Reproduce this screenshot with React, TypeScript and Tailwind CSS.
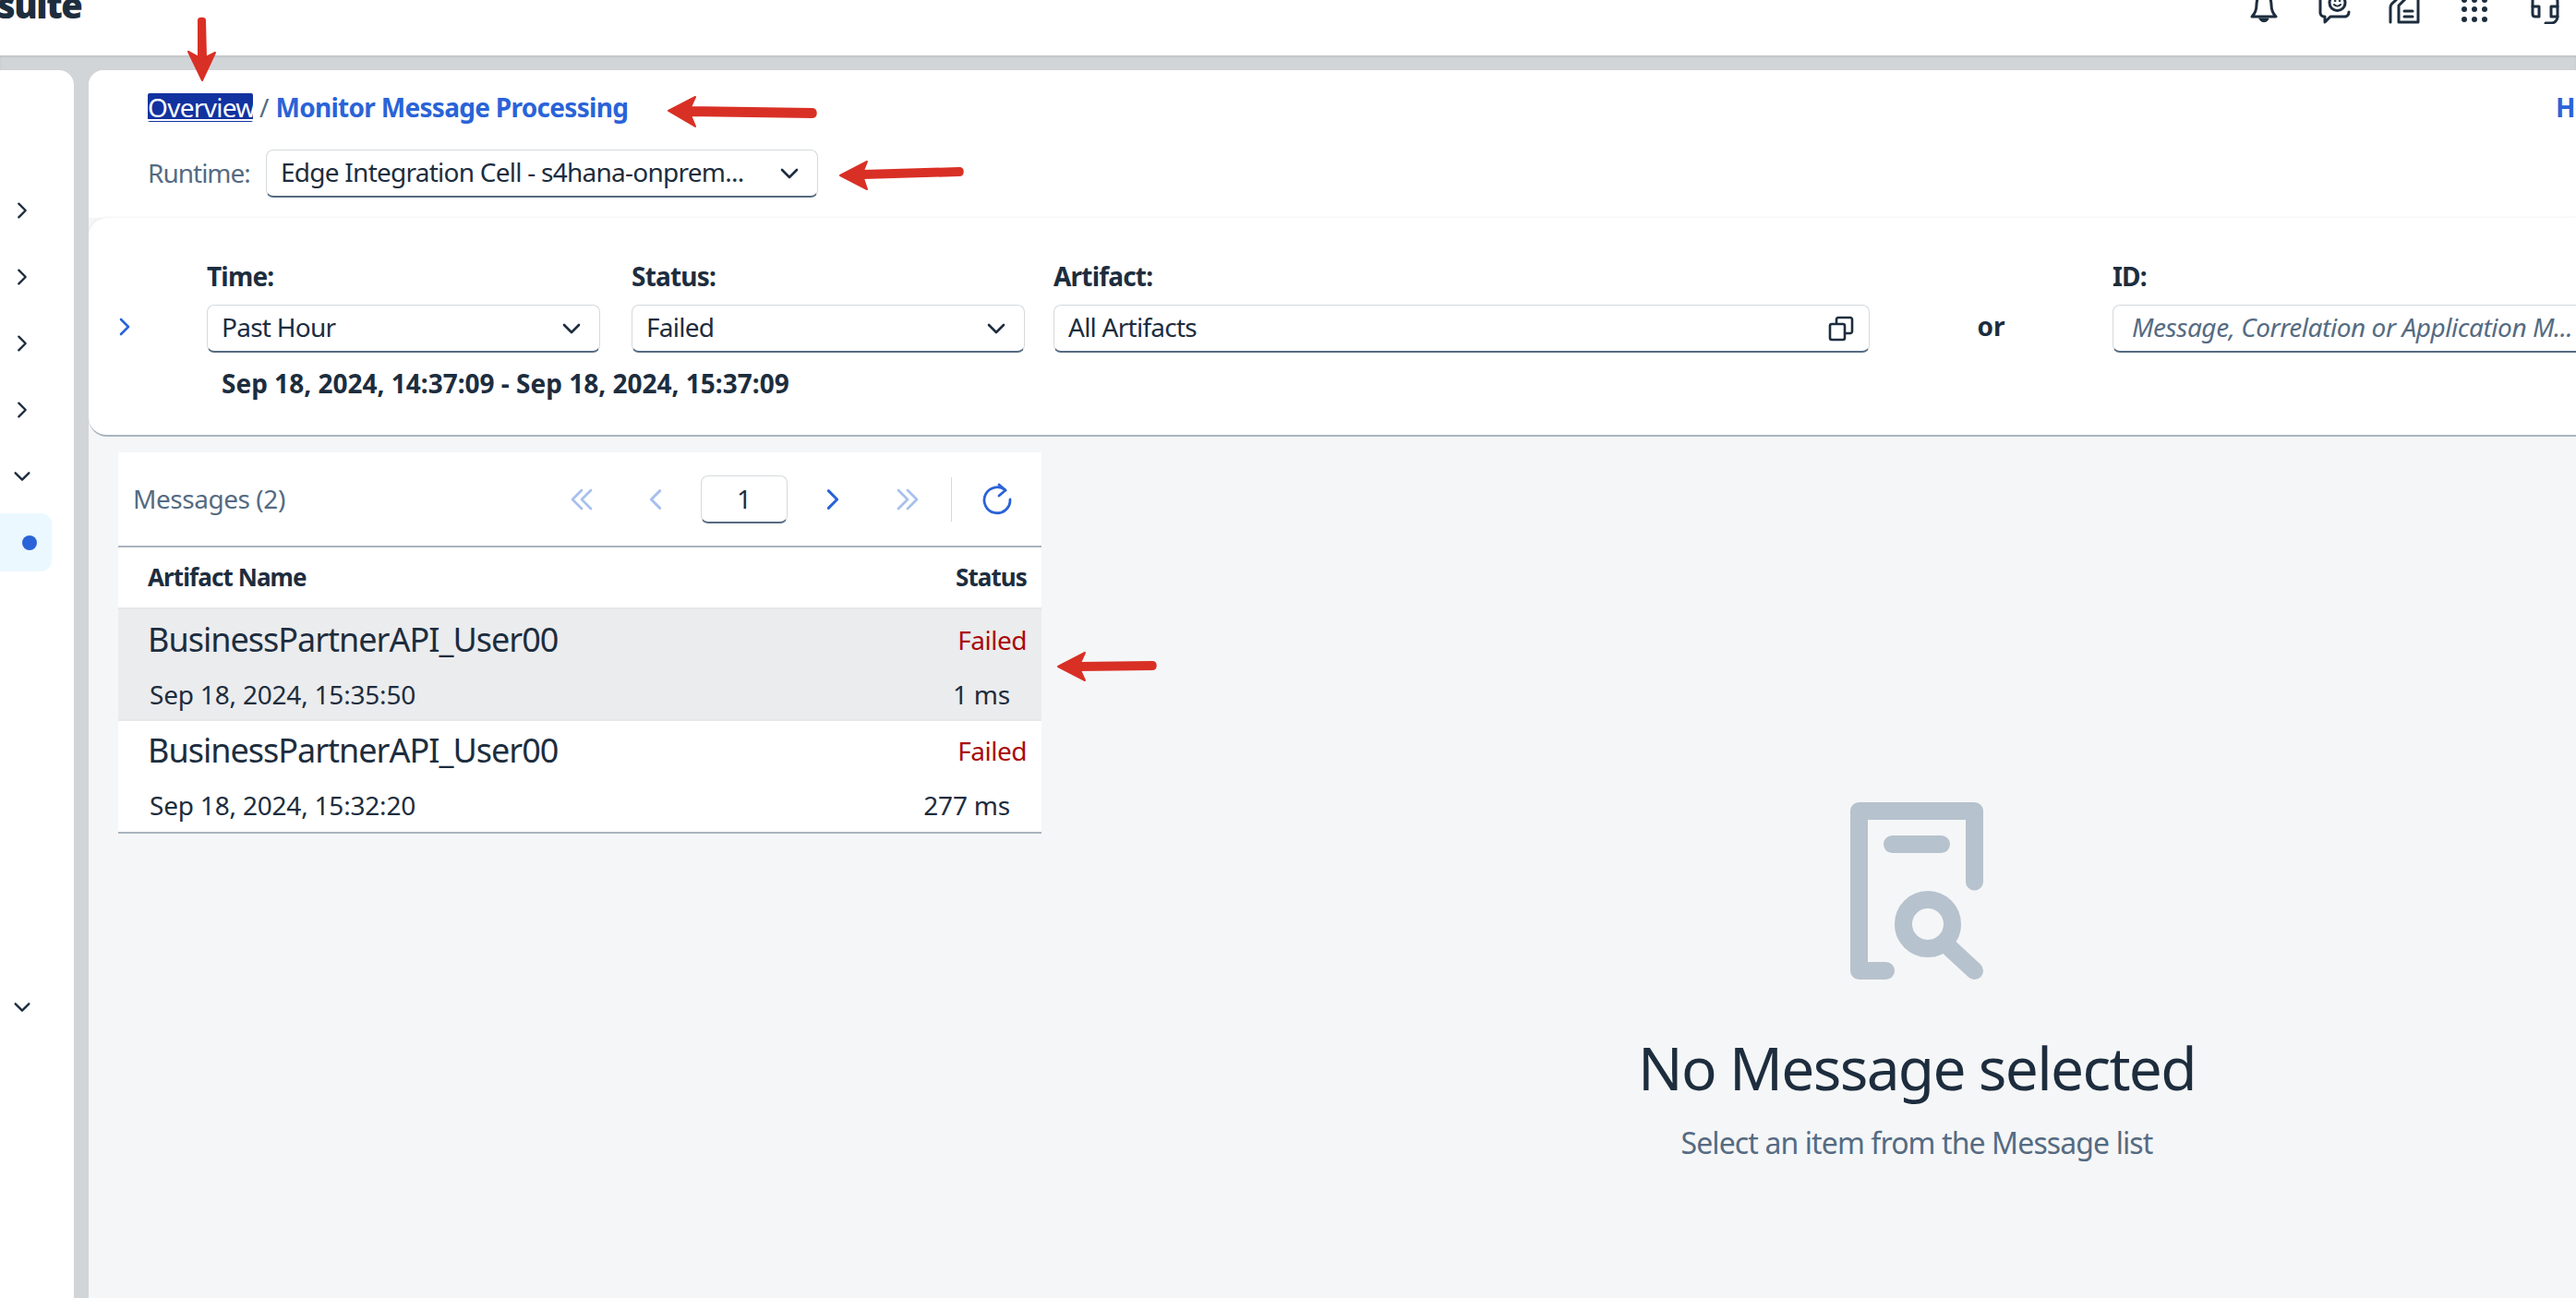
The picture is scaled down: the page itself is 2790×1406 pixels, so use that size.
function Chevron({ dir = "right", className = "" }: { dir?: "right" | "left" | "down"; className?: string }) {
  const d = dir === "right" ? "M8 4l8 8-8 8" : dir === "left" ? "M16 4l-8 8 8 8" : "M4 8l8 8 8-8"
  return (
    <svg viewBox="0 0 24 24" fill="none" stroke="currentColor" strokeWidth="2.6" strokeLinecap="round" strokeLinejoin="round" className={className}>
      <path d={d} />
    </svg>
  )
}

function DoubleChevron({ dir, className = "" }: { dir: "left" | "right"; className?: string }) {
  const d = dir === "left" ? "M12 4l-8 8 8 8M20 4l-8 8 8 8" : "M4 4l8 8-8 8M12 4l8 8-8 8"
  return (
    <svg viewBox="0 0 24 24" fill="none" stroke="currentColor" strokeWidth="2.2" strokeLinecap="round" strokeLinejoin="round" className={className}>
      <path d={d} />
    </svg>
  )
}

function TopIcons() {
  return (
    <div className="flex items-end gap-[40px] pr-[16px] pb-[34px] text-[#1d2d3e]">
      <svg viewBox="0 0 36 36" fill="none" stroke="currentColor" strokeWidth="3" strokeLinecap="round" strokeLinejoin="round" className="w-[36px] h-[36px]">
        <path d="M5 28c3-3 5-7 5-13 0-6 3-11 8-11s8 5 8 11c0 6 2 10 5 13z" />
        <path d="M13 30h10c-1 5-9 5-10 0z" fill="currentColor" strokeWidth="1" />
      </svg>
      <svg viewBox="0 0 36 36" fill="none" stroke="currentColor" strokeWidth="3" strokeLinecap="round" strokeLinejoin="round" className="w-[36px] h-[36px]">
        <path d="M3 2v22c0 2 2 4 4 4h1v6l6-6h15c3 0 5-2 5-5" />
        <circle cx="21.5" cy="13" r="8.5" />
        <path d="M18 15c2 2 5 2 7 0" strokeWidth="2" />
        <circle cx="19" cy="11" r="1" fill="currentColor" strokeWidth="0.5" />
        <circle cx="24" cy="11" r="1" fill="currentColor" strokeWidth="0.5" />
      </svg>
      <svg viewBox="0 0 36 36" fill="none" stroke="currentColor" strokeWidth="3" strokeLinecap="round" strokeLinejoin="round" className="w-[36px] h-[36px]">
        <path d="M3 34V18c0-4 3-5 5-7l4-4" />
        <path d="M12 34V16l8-8h13v26z" />
        <path d="M18 22h9M18 28h9" />
      </svg>
      <svg viewBox="0 0 36 36" fill="currentColor" className="w-[36px] h-[36px]">
        <circle cx="7" cy="10" r="3" />
        <circle cx="18" cy="10" r="3" />
        <circle cx="29" cy="10" r="3" />
        <circle cx="7" cy="20" r="3" />
        <circle cx="18" cy="20" r="3" />
        <circle cx="29" cy="20" r="3" />
        <circle cx="7" cy="31" r="3" />
        <circle cx="18" cy="31" r="3" />
        <circle cx="29" cy="31" r="3" />
      </svg>
      <svg viewBox="0 0 36 36" fill="none" stroke="currentColor" strokeWidth="3" strokeLinecap="round" strokeLinejoin="round" className="w-[36px] h-[36px]">
        <path d="M5 17V12C5 4 11 0 18 0s14 4 14 12v16c0 4-3 7-7 7h-6" />
        <path d="M5 17h7v11H8c-2 0-3-1-3-3z" />
        <path d="M32 17h-7v11h7" />
      </svg>
    </div>
  )
}

function SideRow({ down = false }: { down?: boolean }) {
  return (
    <div className="h-[72px] flex items-center pl-[13px]">
      <Chevron dir={down ? "down" : "right"} className="w-[22px] h-[22px] text-[#1d2d3e]" />
    </div>
  )
}

function Sidebar() {
  return (
    <div className="w-[80px] shrink-0 bg-white rounded-tr-[16px] pt-[116px] flex flex-col">
      <SideRow />
      <SideRow />
      <SideRow />
      <SideRow />
      <SideRow down />
      <div className="mt-[4px] w-[56px] h-[63px] bg-[#ebf8ff] rounded-r-[12px] flex items-center justify-end pr-[16px]">
        <div className="w-[16px] h-[16px] rounded-full bg-[#2a63d8]" />
      </div>
      <div className="mt-[436px]">
        <SideRow down />
      </div>
    </div>
  )
}

function SelectBox({ label, w, icon }: { label: string; w: string; icon?: "copy" }) {
  return (
    <div className={`${w} h-[52px] bg-white rounded-[8px] border border-[#d5dadd] border-b-2 border-b-[#556b81] flex items-center justify-between pl-[15px] pr-[18px] text-[28px] text-[#1d2d3e] shrink-0`}>
      <span className="whitespace-nowrap tracking-[-0.75px] -mt-[3px]">{label}</span>
      {icon === "copy" ? (
        <svg viewBox="0 0 28 28" fill="none" stroke="#1d2d3e" strokeWidth="2.6" strokeLinejoin="round" className="w-[28px] h-[28px] -mr-[2px]">
          <rect x="2" y="9" width="16" height="17" rx="2" />
          <path d="M9 9V4c0-1 1-2 2-2h13c1 0 2 1 2 2v13c0 1-1 2-2 2h-6" />
        </svg>
      ) : (
        <Chevron dir="down" className="w-[24px] h-[24px] text-[#1d2d3e] shrink-0" />
      )}
    </div>
  )
}

function Label({ text }: { text: string }) {
  return <div className="h-[34px] leading-[34px] text-[28px] font-bold text-[#1d2d3e] tracking-[-0.8px] mb-[14px]">{text}</div>
}

function Header() {
  return (
    <div className="h-[160px] shrink-0 bg-white pt-[25px] pl-[64px]">
      <div className="h-[31px] flex items-center text-[28px] leading-[31px] whitespace-nowrap">
        <span className="w-[114px] h-[31px] bg-[#12329f] text-white underline tracking-[-0.7px] rounded-[2px]">Overview</span>
        <span className="text-[#556b82] mx-[7px]">/</span>
        <span className="font-bold text-[#2a63d8] tracking-[-0.7px]">Monitor Message Processing</span>
        <span className="ml-auto w-[22px] overflow-hidden font-bold text-[#2a63d8]">Hi</span>
      </div>
      <div className="mt-[30px] flex items-center">
        <span className="w-[128px] text-[28px] text-[#556b82] tracking-[-1px] -mt-[3px]">Runtime:</span>
        <SelectBox label="Edge Integration Cell - s4hana-onprem..." w="w-[598px]" />
      </div>
    </div>
  )
}

function FilterBar() {
  return (
    <div className="h-[237px] shrink-0 bg-white rounded-l-[20px] border-b-2 border-[#a9b4be] shadow-[0_-1px_3px_rgba(0,0,0,0.05)] flex overflow-hidden">
      <div className="w-[128px] shrink-0 pt-[94px] pl-[27px]">
        <div className="h-[52px] flex items-center -mt-[2px]">
          <Chevron dir="right" className="w-[24px] h-[24px] text-[#2a63d8]" />
        </div>
      </div>
      <div className="w-[460px] shrink-0 pt-[46px]">
        <Label text="Time:" />
        <SelectBox label="Past Hour" w="w-[426px]" />
        <div className="mt-[16px] pl-[16px] h-[34px] leading-[34px] text-[28px] font-bold text-[#1d2d3e] whitespace-nowrap">
          Sep 18, 2024, 14:37:09 - Sep 18, 2024, 15:37:09
        </div>
      </div>
      <div className="w-[457px] shrink-0 pt-[46px]">
        <Label text="Status:" />
        <SelectBox label="Failed" w="w-[426px]" />
      </div>
      <div className="w-[884px] shrink-0 pt-[46px]">
        <Label text="Artifact:" />
        <SelectBox label="All Artifacts" w="w-[884px]" icon="copy" />
      </div>
      <div className="w-[263px] shrink-0 pt-[94px]">
        <div className="h-[52px] flex items-center justify-center text-[28px] font-bold text-[#1d2d3e] -mt-[3px]">or</div>
      </div>
      <div className="w-[600px] shrink-0 pt-[46px]">
        <Label text="ID:" />
        <div className="h-[52px] bg-white rounded-[8px] border border-[#d5dadd] border-b-2 border-b-[#556b81] flex items-center pl-[20px] text-[28px] italic text-[#556b82] whitespace-nowrap overflow-hidden tracking-[-0.45px]">
          <span className="-mt-[3px]">Message, Correlation or Application M...</span>
        </div>
      </div>
    </div>
  )
}

function MessageRow({ date, time, selected }: { date: string; time: string; selected?: boolean }) {
  return (
    <div className={`px-[16px] flex flex-col justify-center gap-[22px] ${selected ? "h-[123px] pt-[2px] bg-[#ebecee] border-y-2 border-[#e5e7e9]" : "h-[120px] bg-white"}`}>
      <div className="flex items-center justify-between h-[40px] pl-[16px]">
        <span className="text-[36px] text-[#1d2d3e] tracking-[-1px]">BusinessPartnerAPI_User00</span>
        <span className="text-[28px] text-[#aa0808] tracking-[-0.5px]">Failed</span>
      </div>
      <div className="flex items-center justify-between h-[34px] pl-[18px] pr-[18px] text-[28px] text-[#1d2d3e] tracking-[-0.2px]">
        <span>{date}</span>
        <span>{time}</span>
      </div>
    </div>
  )
}

function MessageList() {
  return (
    <div className="w-[1000px] shrink-0 self-start bg-white border-b-2 border-[#a9b4be]">
      <div className="h-[103px] border-b-2 border-[#a9b4be] flex items-center pl-[16px]">
        <span className="w-[453px] text-[28px] text-[#556b82] tracking-[-0.45px] -mt-[2px]">Messages (2)</span>
        <div className="w-[66px] flex justify-center">
          <DoubleChevron dir="left" className="w-[30px] h-[30px] text-[#a8c0ee]" />
        </div>
        <div className="w-[94px] flex justify-center">
          <Chevron dir="left" className="w-[28px] h-[28px] text-[#a8c0ee]" />
        </div>
        <div className="w-[94px] h-[52px] ml-[2px] rounded-[8px] border border-[#d5dadd] border-b-2 border-b-[#556b81] flex items-center justify-center text-[28px] text-[#1d2d3e]">1</div>
        <div className="w-[98px] flex justify-center">
          <Chevron dir="right" className="w-[28px] h-[28px] text-[#2a63d8]" />
        </div>
        <div className="w-[64px] flex justify-center">
          <DoubleChevron dir="right" className="w-[30px] h-[30px] text-[#a8c0ee]" />
        </div>
        <div className="w-px h-[48px] bg-[#d5dadd] ml-[15px]" />
        <svg viewBox="0 0 36 36" fill="none" stroke="#2a63d8" strokeWidth="2.8" strokeLinecap="round" strokeLinejoin="round" className="w-[36px] h-[36px] ml-[31px]">
          <path d="M27 8a14 14 0 1 0 5 10" />
          <path d="M20 2l7 6-7 6" />
        </svg>
      </div>
      <div className="h-[65px] px-[16px] flex items-center justify-between text-[26px] font-bold text-[#1d2d3e] tracking-[-0.9px]">
        <span className="pl-[16px]">Artifact Name</span>
        <span>Status</span>
      </div>
      <MessageRow date="Sep 18, 2024, 15:35:50" time="1 ms" selected />
      <MessageRow date="Sep 18, 2024, 15:32:20" time="277 ms" />
    </div>
  )
}

function EmptyState() {
  return (
    <div className="w-[1896px] shrink-0 pt-[379px] flex flex-col items-center">
      <svg viewBox="0 0 144 192" fill="none" stroke="#b6c2cd" strokeWidth="19" strokeLinecap="round" strokeLinejoin="round" className="w-[144px] h-[192px]">
        <path d="M38.5 182.5H9.5V9.5H134.5V86" />
        <path d="M45.5 45.5H98.5" />
        <circle cx="84" cy="132" r="26.5" />
        <path d="M108 158L134.5 182.5" />
      </svg>
      <div className="mt-[56px] h-[80px] leading-[80px] text-[64px] text-[#1d2d3e] whitespace-nowrap tracking-[-1.7px]">No Message selected</div>
      <div className="mt-[20px] h-[42px] leading-[42px] text-[32px] text-[#556b82] whitespace-nowrap tracking-[-0.9px]">Select an item from the Message list</div>
    </div>
  )
}

function Annotations() {
  return (
    <svg className="absolute inset-0 w-full h-full pointer-events-none" viewBox="0 0 2790 1406" fill="#d93025">
      <path d="M215 22c0-3 7-3 7 0l1 40 10-5-14 30-15-31 11 6z" stroke="#d93025" strokeWidth="2" strokeLinejoin="round" />
      <path d="M724 120l29-15-5 11 132 2c5 0 5 9 0 9l-132-2 5 12z" stroke="#d93025" strokeWidth="2" strokeLinejoin="round" />
      <path d="M910 190l29-15-4 10 104-3c5 0 5 8 0 8l-104 3 4 12z" stroke="#d93025" strokeWidth="2" strokeLinejoin="round" />
      <path d="M1146 722l29-15-5 11 78-1c5 0 5 8 0 8l-78 1 5 11z" stroke="#d93025" strokeWidth="2" strokeLinejoin="round" />
    </svg>
  )
}

export default function App() {
  return (
    <div className="relative w-[2790px] h-[1406px] overflow-hidden flex flex-col bg-[#d1d5d8] font-['Noto_Sans','Open_Sans',sans-serif]">
      <div className="h-[60px] shrink-0 bg-white flex items-end justify-between overflow-hidden">
        <span className="text-[38px] leading-[38px] font-black text-[#1d2d3e] pb-[36px] -ml-[3px] tracking-[-1.4px]">suite</span>
        <TopIcons />
      </div>
      <div className="h-[16px] shrink-0 shadow-[inset_0_2px_2px_rgba(0,0,0,0.08)]" />
      <div className="flex-1 flex gap-[16px] min-h-0">
        <Sidebar />
        <div className="flex-1 min-w-0 bg-[#f5f6f7] rounded-tl-[16px] overflow-hidden flex flex-col">
          <Header />
          <FilterBar />
          <div className="flex-1 flex pt-[17px] pl-[32px]">
            <MessageList />
            <EmptyState />
          </div>
        </div>
      </div>
      <Annotations />
    </div>
  )
}
